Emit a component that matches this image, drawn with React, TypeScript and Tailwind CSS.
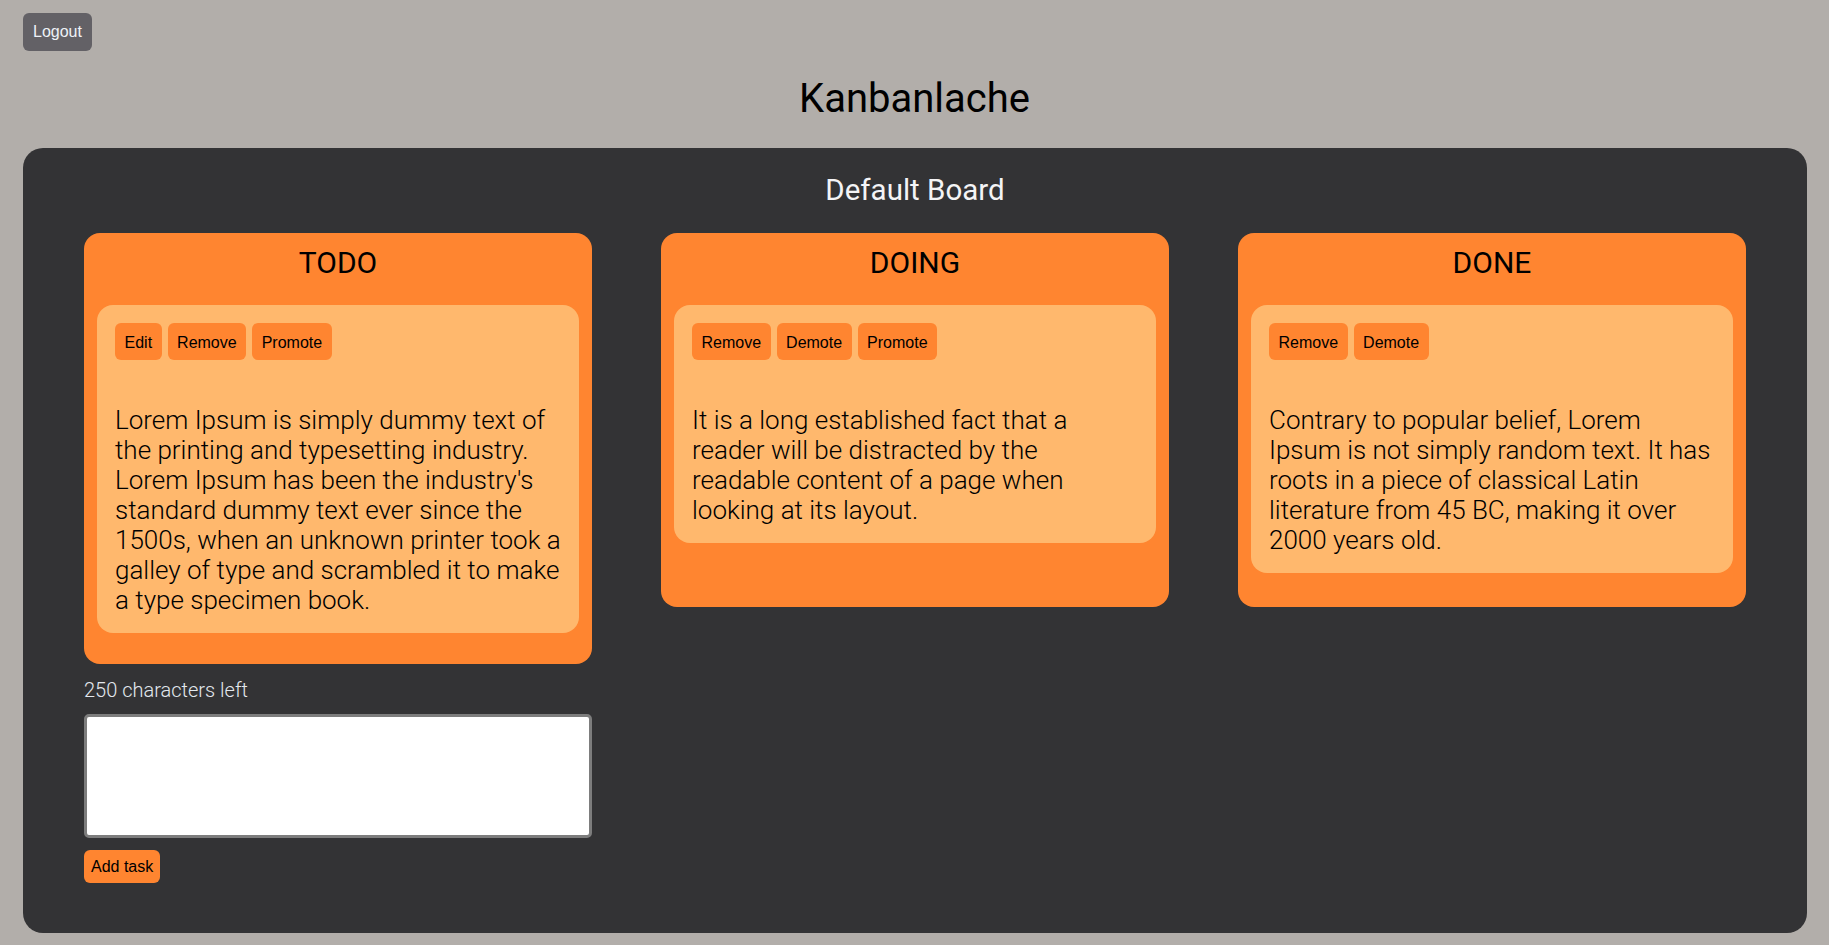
import * as React from "react";

type Task = {
  text: string;
  actions: string[];
};

type Column = {
  title: string;
  tasks: Task[];
};

const COLUMNS: Column[] = [
  {
    title: "TODO",
    tasks: [
      {
        actions: ["Edit", "Remove", "Promote"],
        text: "Lorem Ipsum is simply dummy text of the printing and typesetting industry. Lorem Ipsum has been the industry's standard dummy text ever since the 1500s, when an unknown printer took a galley of type and scrambled it to make a type specimen book.",
      },
    ],
  },
  {
    title: "DOING",
    tasks: [
      {
        actions: ["Remove", "Demote", "Promote"],
        text: "It is a long established fact that a reader will be distracted by the readable content of a page when looking at its layout.",
      },
    ],
  },
  {
    title: "DONE",
    tasks: [
      {
        actions: ["Remove", "Demote"],
        text: "Contrary to popular belief, Lorem Ipsum is not simply random text. It has roots in a piece of classical Latin literature from 45 BC, making it over 2000 years old.",
      },
    ],
  },
];

const MAX_CHARS = 250;

function TaskCard({ task }: { task: Task }) {
  return (
    <div className="rounded-[16px] bg-[#ffb86d] p-[18px]">
      <div className="flex gap-[6px]">
        {task.actions.map((action) => (
          <button
            key={action}
            className="rounded-[6px] bg-[#ff8530] px-[9.5px] pt-[10px] pb-[8px] text-[16px] leading-[19px] text-black font-['Liberation_Sans',Arial,sans-serif]"
          >
            {action}
          </button>
        ))}
      </div>
      <p className="mt-[45px] text-[26px] leading-[30px] font-light text-black">
        {task.text}
      </p>
    </div>
  );
}

function BoardColumn({ column }: { column: Column }) {
  return (
    <div className="min-h-[374px] rounded-[16px] bg-[#ff8530] px-[13px] pt-[11px] pb-[31px]">
      <h2 className="mb-[23px] text-center text-[30px] leading-[38px] font-normal text-black">
        {column.title}
      </h2>
      <div className="flex flex-col gap-[16px]">
        {column.tasks.map((task, i) => (
          <TaskCard key={i} task={task} />
        ))}
      </div>
    </div>
  );
}

export default function App() {
  const [draft, setDraft] = React.useState("");

  return (
    <div className="min-h-screen bg-[#b2aeaa] pt-[13px] pb-[12px] font-['Roboto',sans-serif]">
      <div className="px-[23px]">
        <button className="rounded-[6px] bg-[#636166] px-[10px] py-[10px] text-[16px] leading-[18px] text-[#eef2f7] font-['Liberation_Sans',Arial,sans-serif]">
          Logout
        </button>
      </div>

      <h1 className="mt-[24px] text-center text-[40px] leading-[47px] font-normal text-black">
        Kanbanlache
      </h1>

      <div className="mt-[26px] ml-[23px] mr-[22px] rounded-[20px] bg-[#333335] pt-[23px] pb-[50px]">
        <h2 className="text-center text-[29.5px] leading-[38px] font-normal text-[#f4f4f6]">
          Default Board
        </h2>

        <div className="mt-[24px] grid grid-cols-3 items-start gap-[69px] px-[61px]">
          {COLUMNS.map((column, idx) => (
            <div key={column.title} className="flex flex-col">
              <BoardColumn column={column} />
              {idx === 0 && (
                <div className="flex flex-col">
                  <div className="mt-[15px] text-[20px] leading-[23px] font-light text-[#e3e8ee]">
                    {MAX_CHARS - draft.length} characters left
                  </div>
                  <textarea
                    value={draft}
                    maxLength={MAX_CHARS}
                    onChange={(e) => setDraft(e.target.value)}
                    className="mt-[12px] h-[124px] w-full resize-none rounded-[5px] border-[3px] border-[#7d7d7d] bg-white p-1 outline-none"
                  />
                  <div>
                    <button className="mt-[12px] rounded-[6px] bg-[#ff8530] px-[7px] py-[7px] text-[16px] leading-[19px] text-black font-['Liberation_Sans',Arial,sans-serif]">
                      Add task
                    </button>
                  </div>
                </div>
              )}
            </div>
          ))}
        </div>
      </div>
    </div>
  );
}
